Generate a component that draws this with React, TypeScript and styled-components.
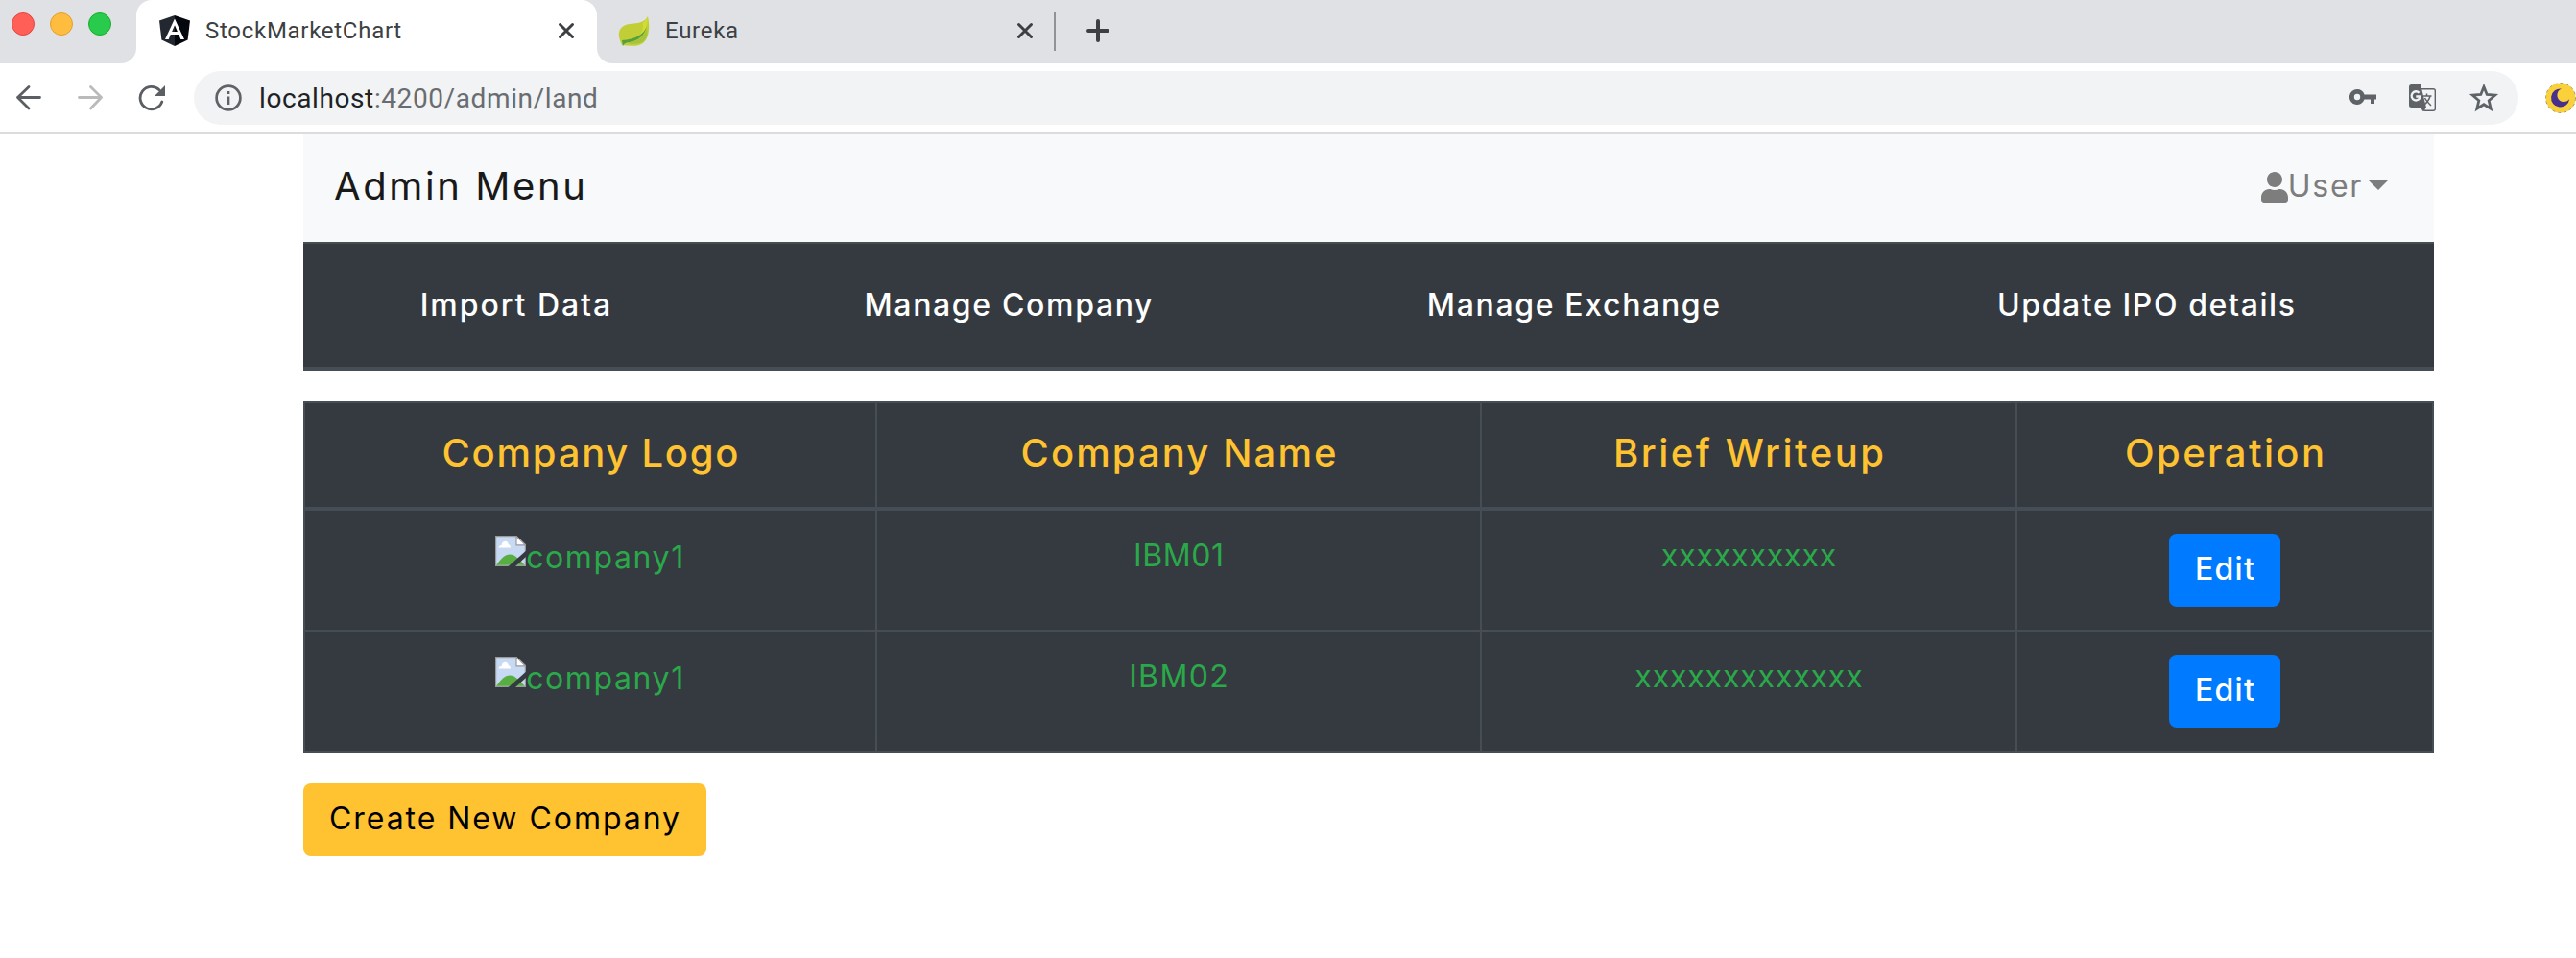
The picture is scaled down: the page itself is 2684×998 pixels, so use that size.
import React from 'react';
import styled, { createGlobalStyle } from 'styled-components';

const Global = createGlobalStyle`
  * { box-sizing: border-box; }
  html, body { margin: 0; background: #fff; overflow: hidden; }
  body { font-family: Inter, "Liberation Sans", sans-serif; font-size: 32px; line-height: 48px; color: #212529; }
  svg { display: block; flex: none; }
`;

const TabStrip = styled.div`
  height: 66px; background: #dfe1e5; display: flex; font-family: Roboto, sans-serif;
`;
const Lights = styled.div`
  width: 142px; padding: 13px 0 0 12px; display: flex; gap: 16px;
`;
const Light = styled.i<{ $fill: string; $edge: string }>`
  width: 24px; height: 24px; border-radius: 50%;
  background: ${p => p.$fill}; border: 1px solid ${p => p.$edge};
`;
const Tab = styled.div<{ $active?: boolean }>`
  position: relative; width: ${p => (p.$active ? 480 : 476)}px; height: 66px;
  padding: ${p => (p.$active ? '0 22px 2px 24px' : '0 20px 2px 22px')};
  display: flex; align-items: center; background: ${p => (p.$active ? '#fff' : 'transparent')};
  border-radius: 16px 16px 0 0;
  ${p => p.$active && `
    &::before, &::after { content: ''; position: absolute; bottom: 0; width: 16px; height: 16px; }
    &::before { left: -16px; background: radial-gradient(circle at 0 0, transparent 15.5px, #fff 16.5px); }
    &::after { right: -16px; background: radial-gradient(circle at 100% 0, transparent 15.5px, #fff 16.5px); }
  `}
`;
const TabTitle = styled.span`
  flex: 1; margin-left: 16px; font-size: 24px; line-height: 30px; color: #3c4043; letter-spacing: 0.72px;
`;
const Divider = styled.i`width: 2px; height: 40px; margin: 13px 32px 0 0; background: #8f9296;`;
const NewTab = styled.div`padding-top: 20px;`;

const Toolbar = styled.div`
  height: 74px; display: flex; align-items: center; border-bottom: 2px solid #dadce0; padding-left: 16px;
`;
const NavIcons = styled.div`width: 186px; display: flex; gap: 36px; align-items: center;`;
const Omnibox = styled.div`
  width: 2422px; flex: none; height: 56px; border-radius: 28px; background: #f1f3f4;
  display: flex; align-items: center; padding: 0 20px 0 22px;
`;
const Url = styled.div`
  flex: 1; margin-left: 18px; padding-top: 1px; font: 28px/40px Roboto, sans-serif; color: #696c70; letter-spacing: 0.6px;
  b { font-weight: 400; color: #202124; }
`;
const OmniIcons = styled.div`display: flex; align-items: center; gap: 34px;`;
const Extension = styled.div`margin-left: 28px;`;

const Page = styled.main`width: 2220px; margin-left: 316px;`;
const Navbar = styled.nav`
  height: 112px; background: #f8f9fb; display: flex; align-items: center; justify-content: space-between;
  padding: 0 48px 4px 32px;
`;
const Brand = styled.div`font-size: 40px; color: #191919; letter-spacing: 2.6px;`;
const UserMenu = styled.div`
  display: flex; align-items: center; color: #7d7d7e; letter-spacing: 1.7px;
  svg { margin-top: 1px; }
`;
const Caret = styled.i`
  margin: 0 0 2px 6px; border: 10px solid transparent; border-top-color: #7d7d7e; border-bottom: 0;
`;

const MenuTable = styled.div`
  height: 134px; display: grid; grid-template-columns: 442px 585px 593px 600px; align-items: center;
  background: #343a40; border: solid #454d55; border-width: 2px 0 4px; margin-bottom: 32px;
`;
const MenuItem = styled.a<{ $ls: number }>`
  text-align: center; color: #fff; font-weight: 500;
  letter-spacing: ${p => p.$ls}px; text-indent: ${p => p.$ls}px;
`;

const Table = styled.table`
  width: 2220px; table-layout: fixed; border-collapse: separate; border-spacing: 0;
  background: #343a40; text-align: center; color: #2aa84a;
  border: solid #454d55; border-width: 2px 0 0 2px; margin-bottom: 32px;
`;
const HeadCell = styled.th<{ $w: number; $ls: number }>`
  width: ${p => p.$w}px; height: 112px; padding: 0 0 4px; color: #ffc230; font-size: 40px; font-weight: 500;
  letter-spacing: ${p => p.$ls}px; text-indent: ${p => p.$ls}px;
  border: solid #454d55; border-width: 0 2px 4px 0;
`;
const Cell = styled.td<{ $ls?: number }>`
  height: 126px; padding: 23px 0 0; vertical-align: top;
  letter-spacing: ${p => p.$ls ?? 0}px; text-indent: ${p => p.$ls ?? 0}px;
  border: solid #454d55; border-width: 0 2px 2px 0;
`;
const Logo = styled.div`
  display: flex; justify-content: center; padding-top: 2px; letter-spacing: 1.6px; text-indent: 0;
  svg { margin-top: 1px; }
`;
const Button = styled.button<{ $kind: 'primary' | 'warning' }>`
  display: block; height: 76px; border: 0; border-radius: 8px; padding: 0 0 3px; font: inherit; text-indent: 1px;
  ${p => p.$kind === 'primary'
    ? 'width: 116px; margin: 1px auto 0; background: #007bff; color: #fff; font-weight: 500; letter-spacing: 1.3px;'
    : 'width: 420px; background: #ffc230; color: #000; letter-spacing: 1.95px;'}
`;

const Close = () => (
  <svg width="20" height="20" viewBox="0 0 20 20" stroke="#3c4043" strokeWidth="3" strokeLinecap="round">
    <path d="M3.5 3.5l13 13M16.5 3.5l-13 13" />
  </svg>
);
const Angular = () => (
  <svg width="32" height="32" viewBox="0 0 32 32">
    <path fill="#23272f" d="M16 0L0 5.400 2.400 25.500 16 32z" />
    <path fill="#05070f" d="M16 0l16 5.400-2.400 20.100L16 32z" />
    <path fill="#fff" fillRule="evenodd" d="M16 3.500L6 25h3.700l2-5h8.600l2 5H26zM16 10.200l2.900 6.800h-5.800z" />
  </svg>
);
const Leaf = () => (
  <svg width="33" height="33" viewBox="0 0 33 33">
    <path fill="#c1ce36" d="M31 1C28 8 20 8 12 9 4 10 0 15 1 22c.5 4 2 6 3 9 9 1 18 2 23-3 6-6 6-17 4-27z" />
    <path fill="#d3dc30" d="M30.500 2c1 8-2 15-9 20 5-6 5-10 4-14 2-1 4-3 5-6z" />
    <path fill="#55a03c" d="M30 11c-3 9-12 14-26 15l1 6c1-2 2-3 4-3.500 11-1 19-7.500 21-17.500z" />
    <path fill="#a5c43a" d="M30 13c-2 9-9 14-21 15.500 5 2 14 2 18-2 3-3 4-8 3-13.500z" />
  </svg>
);
const KeyIcon = () => (
  <svg width="28" height="18" viewBox="0 0 28 18" fill="#5f6368">
    <path fillRule="evenodd" d="M8 0a8 8 0 0 1 7.500 5.500H28v5h-2V15h-4v-4.500h-6.500A8 8 0 1 1 8 0zM8 4.800a3.200 3.200 0 1 0 0 6.400 3.200 3.200 0 0 0 0-6.400z" />
  </svg>
);
const TranslateIcon = () => (
  <svg width="28" height="28" viewBox="0 0 28 28" fill="none" stroke="#5f6368">
    <path strokeWidth="1.400" d="M12 4.700h13.300a2 2 0 0 1 2 2v18.600a2 2 0 0 1-2 2H16l-2-4" />
    <path fill="#5f6368" stroke="none" d="M2.500 0H12l6 24-3 4-2.500-4h-10A2.500 2.500 0 0 1 0 21.500v-19A2.500 2.500 0 0 1 2.500 0zM12 24h5.500L14.500 28z" />
    <path stroke="#f1f3f4" strokeWidth="2.300" d="M10.600 8.700a4.600 4.600 0 1 0 1.200 3.800H7.300" />
    <path strokeWidth="1.500" d="M14.500 12h9M18.500 9.500V12M22 12c-1 4-3 6.500-6 9M16.500 14c1.500 3 3.500 5 6.500 8" />
  </svg>
);
const StarIcon = () => (
  <svg width="32" height="32" viewBox="0 0 32 32" fill="none" stroke="#5f6368" strokeWidth="2.800">
    <path d="M16 4.500l3.200 8 8.500.700-6.500 5.600 2 8.400L16 22.700l-7.200 4.500 2-8.400-6.500-5.600 8.500-.7z" />
  </svg>
);
const MoonIcon = () => (
  <svg width="32" height="32" viewBox="0 0 32 32">
    <circle cx="16" cy="16" r="15.500" fill="#fbd13a" stroke="#a89a68" strokeWidth="1" strokeDasharray="3 3" />
    <path fill="#48308c" d="M17 6.500A7 7 0 1 0 25.200 17 9.600 9.600 0 1 1 17 6.500z" />
  </svg>
);
const UserIcon = () => (
  <svg width="28" height="32" viewBox="0 0 448 512" fill="#7d7d7e">
    <path d="M224 256c70.700 0 128-57.300 128-128S294.700 0 224 0 96 57.300 96 128s57.300 128 128 128zm89.600 32h-16.700c-22.200 10.200-46.900 16-72.900 16s-50.600-5.800-72.900-16h-16.700C60.200 288 0 348.200 0 422.400V464c0 26.500 21.500 48 48 48h352c26.500 0 48-21.500 48-48v-41.600c0-74.200-60.200-134.400-134.400-134.400z" />
  </svg>
);
const BrokenImage = () => (
  <svg width="32" height="32" viewBox="0 0 16 16">
    <path fill="#c8d9f4" stroke="#9a9a9a" strokeWidth=".6" d="M.3.300h10.700l4.700 4.500v10.900H.3z" />
    <path fill="#fff" stroke="#9a9a9a" strokeWidth=".6" d="M11 .3v4.600h4.700z" />
    <path fill="#fff" d="M1.800 6.300c0-1 .8-1.400 1.500-1.300.3-2.700 3.300-2.700 3.600-.4.800.1 1.100.8 1.100 1.700z" />
    <path fill="#58ae43" d="M.6 15.400C3 12 5 9.800 7.600 9.800c2.700 0 4.600 2.300 7.800 5.600z" />
    <path fill="#343a40" d="M16.200 7.700L6.800 16h3.700l5.700-5.200z" />
  </svg>
);

const companies = [
  { name: 'IBM01', nameLs: 0.6, writeup: 'xxxxxxxxxx' },
  { name: 'IBM02', nameLs: 1.4, writeup: 'xxxxxxxxxxxxx' },
];

export default function App() {
  return (
    <>
      <Global />
      <TabStrip>
        <Lights>
          <Light $fill="#ff5f57" $edge="#e2463f" />
          <Light $fill="#ffbd3f" $edge="#e0a030" />
          <Light $fill="#28cb4b" $edge="#1dad2b" />
        </Lights>
        <Tab $active>
          <Angular />
          <TabTitle>StockMarketChart</TabTitle>
          <Close />
        </Tab>
        <Tab>
          <Leaf />
          <TabTitle>Eureka</TabTitle>
          <Close />
        </Tab>
        <Divider />
        <NewTab>
          <svg width="24" height="24" viewBox="0 0 24 24" stroke="#3c4043" strokeWidth="4" strokeLinecap="round">
            <path d="M12 2v20M2 12h20" />
          </svg>
        </NewTab>
      </TabStrip>
      <Toolbar>
        <NavIcons>
          <svg width="28" height="28" viewBox="0 0 28 28" fill="none" stroke="#5b5e62" strokeWidth="2.800" strokeLinecap="round" strokeLinejoin="round">
            <path d="M25.500 13.500H2.500M14 2.500L2.500 13.500 14 25" />
          </svg>
          <svg width="28" height="28" viewBox="0 0 28 28" fill="none" stroke="#b9babc" strokeWidth="2.800" strokeLinecap="round" strokeLinejoin="round">
            <path d="M2.500 13.500h23M14.500 2.500l11 11-11 11.500" />
          </svg>
          <svg width="28" height="28" viewBox="0 0 28 28" fill="none" stroke="#5b5e62" strokeWidth="2.800" strokeLinecap="round">
            <path d="M24.800 18A11.700 11.700 0 1 1 22 5.700" />
            <path d="M28 1v11H17z" fill="#5b5e62" stroke="none" />
          </svg>
        </NavIcons>
        <Omnibox>
          <svg width="28" height="28" viewBox="0 0 28 28" fill="none" stroke="#5f6368" strokeWidth="2.700">
            <circle cx="14" cy="14" r="12.400" />
            <path d="M14 12.500V21M14 7v3" />
          </svg>
          <Url><b>localhost</b>:4200/admin/land</Url>
          <OmniIcons>
            <KeyIcon />
            <TranslateIcon />
            <StarIcon />
          </OmniIcons>
        </Omnibox>
        <Extension><MoonIcon /></Extension>
      </Toolbar>
      <Page>
        <Navbar>
          <Brand>Admin Menu</Brand>
          <UserMenu><UserIcon />User<Caret /></UserMenu>
        </Navbar>
        <MenuTable>
          <MenuItem $ls={1.95}>Import Data</MenuItem>
          <MenuItem $ls={1.65}>Manage Company</MenuItem>
          <MenuItem $ls={1.65}>Manage Exchange</MenuItem>
          <MenuItem $ls={1.6}>Update IPO details</MenuItem>
        </MenuTable>
        <Table>
          <thead>
            <tr>
              <HeadCell $w={596} $ls={1.75}>Company Logo</HeadCell>
              <HeadCell $w={630} $ls={2.1}>Company Name</HeadCell>
              <HeadCell $w={558} $ls={2.5}>Brief Writeup</HeadCell>
              <HeadCell $w={434} $ls={2.4}>Operation</HeadCell>
            </tr>
          </thead>
          <tbody>
            {companies.map(c => (
              <tr key={c.name}>
                <Cell><Logo><BrokenImage />company1</Logo></Cell>
                <Cell $ls={c.nameLs}>{c.name}</Cell>
                <Cell $ls={0.85}>{c.writeup}</Cell>
                <Cell><Button $kind="primary">Edit</Button></Cell>
              </tr>
            ))}
          </tbody>
        </Table>
        <Button $kind="warning">Create New Company</Button>
      </Page>
    </>
  );
}
